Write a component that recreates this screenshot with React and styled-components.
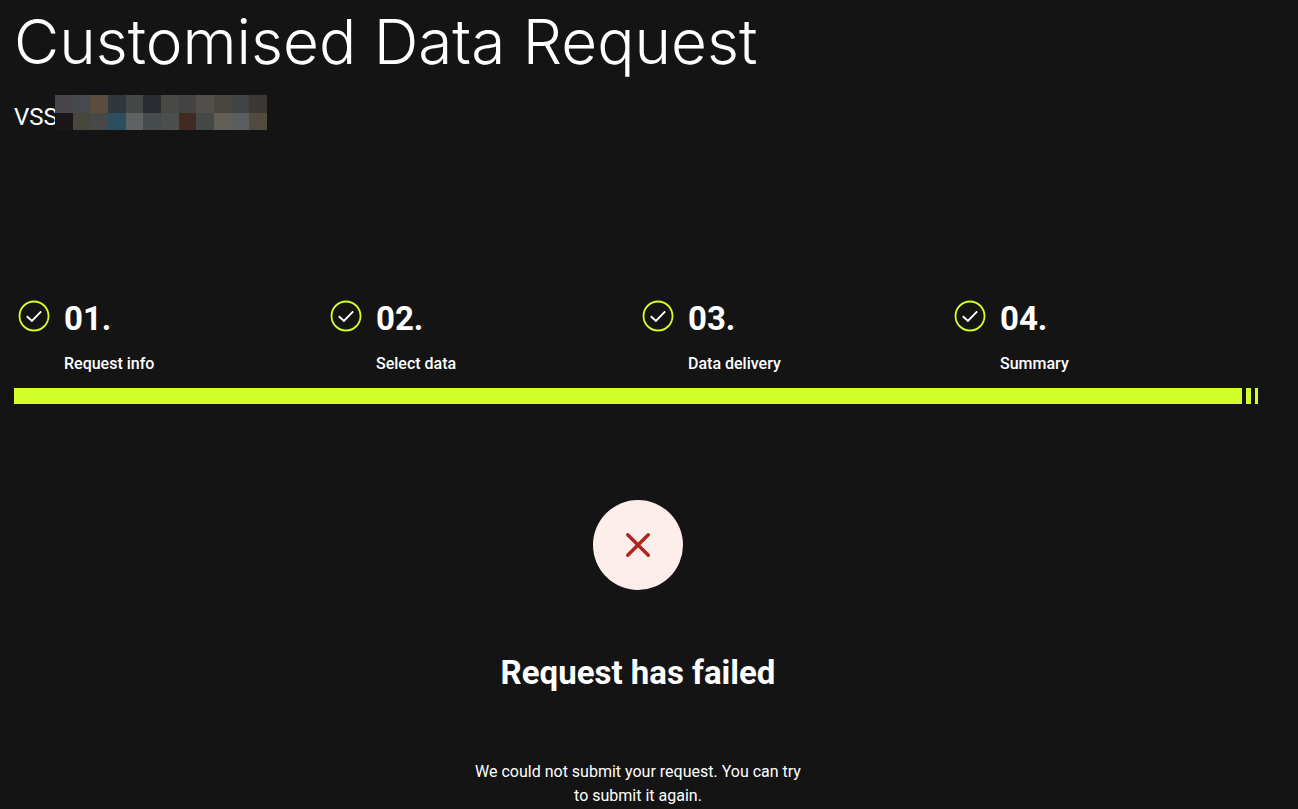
import styled, { createGlobalStyle } from 'styled-components'

const steps = [
  { number: '01.', label: 'Request info' },
  { number: '02.', label: 'Select data' },
  { number: '03.', label: 'Data delivery' },
  { number: '04.', label: 'Summary' },
]

const mosaic = [
  '#48464a', '#444a4f', '#5a4d3e', '#31353d', '#434746', '#2b2c32',
  '#484844', '#434343', '#544e4a', '#494640', '#404446', '#3d3833',
  '#1b161a', '#48473d', '#484849', '#2d4e5e', '#5e6262', '#464c4d',
  '#4d4f4e', '#402a22', '#464846', '#625f59', '#5b5e5f', '#504b3e',
]

export default function App() {
  return (
    <>
      <GlobalStyle />
      <Page>
        <Title>Customised Data Request</Title>
        <Subtitle>
          <span>VSS</span>
          <Mosaic>
            {mosaic.map((color, i) => (
              <Tile key={i} $color={color} />
            ))}
          </Mosaic>
        </Subtitle>

        <Steps>
          {steps.map(({ number, label }) => (
            <Step key={number}>
              <CheckIcon />
              <div>
                <StepNumber>{number}</StepNumber>
                <StepLabel>{label}</StepLabel>
              </div>
            </Step>
          ))}
        </Steps>
        <Progress>
          <Bar />
          <Bar $width={5} />
          <Bar $width={3} />
        </Progress>

        <Result>
          <Badge>
            <CrossIcon />
          </Badge>
          <h2>Request has failed</h2>
          <p>We could not submit your request. You can try to submit it again.</p>
        </Result>
      </Page>
    </>
  )
}

function CheckIcon() {
  return (
    <svg width="40" height="40" viewBox="0 0 40 40" fill="none" aria-hidden="true">
      <circle cx="20" cy="20" r="14.5" stroke="#d2ff28" strokeWidth="1.8" />
      <path d="M12.8 20.3 L17.9 25 L27.2 15.3" stroke="#fff" strokeWidth="1.9" />
    </svg>
  )
}

function CrossIcon() {
  return (
    <svg width="30" height="30" viewBox="0 0 30 30" fill="none" aria-hidden="true">
      <path
        d="M4.7 4.7 L25.3 25.3 M25.3 4.7 L4.7 25.3"
        stroke="#b0241c"
        strokeWidth="3.4"
        strokeLinecap="round"
      />
    </svg>
  )
}

const GlobalStyle = createGlobalStyle`
  * {
    box-sizing: border-box;
  }

  body {
    margin: 0;
    background: #141414;
    color: #fff;
    font-family: Roboto, sans-serif;
    font-size: 16px;
    line-height: 24px;
  }

  h1, h2, p, ol {
    margin: 0;
    padding: 0;
  }
`

const Page = styled.main`
  padding: 6px 36px 0 14px;
`

const Title = styled.h1`
  font-family: Inter, sans-serif;
  font-size: 62px;
  font-weight: 300;
  line-height: 72px;
`

const Subtitle = styled.div`
  display: flex;
  margin-top: 17px;
  font-size: 24px;
  line-height: 44px;

  span {
    width: 41px;
  }
`

const Mosaic = styled.div`
  display: grid;
  grid-template-columns: repeat(12, 1fr);
  grid-template-rows: 18px 17px;
  width: 212px;
`

const Tile = styled.div`
  background: ${({ $color }) => $color};
`

const Steps = styled.ol`
  display: grid;
  grid-template-columns: repeat(4, 1fr);
  margin-top: 157px;
  list-style: none;
`

const Step = styled.li`
  display: flex;
  gap: 10px;
`

const StepNumber = styled.p`
  font-size: 33px;
  font-weight: 700;
  line-height: 46px;
`

const StepLabel = styled.p`
  margin-top: 10px;
  font-weight: 500;
`

const Progress = styled.div`
  display: flex;
  gap: 4px;
  height: 16px;
  margin-top: 12px;
  padding-right: 4px;
`

const Bar = styled.div`
  flex: ${({ $width }) => ($width ? `0 0 ${$width}px` : '1')};
  background: #d2ff28;
`

const Result = styled.section`
  display: flex;
  flex-direction: column;
  align-items: center;
  padding-top: 96px;
  text-align: center;

  h2 {
    margin-top: 60px;
    font-size: 33px;
    font-weight: 700;
    line-height: 46px;
  }

  p {
    max-width: 340px;
    margin-top: 64px;
  }
`

const Badge = styled.div`
  display: flex;
  align-items: center;
  justify-content: center;
  width: 90px;
  height: 90px;
  border-radius: 50%;
  background: #fdeeec;
`
